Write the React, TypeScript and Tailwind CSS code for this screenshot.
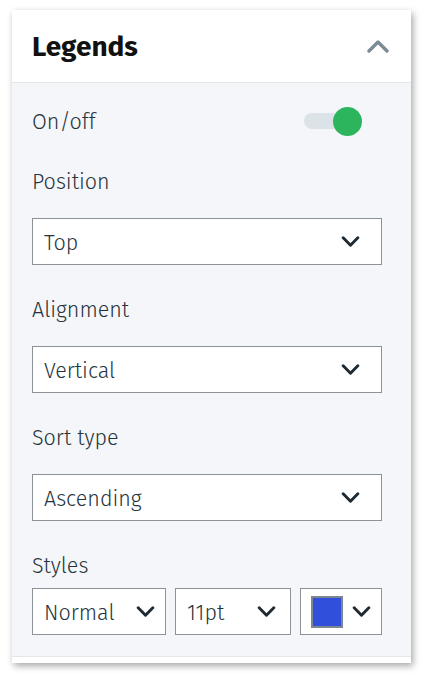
import React from 'react'

// ── Icons ──────────────────────────────────────────────────────────────────────

function ChevronDown({ className = '' }: { className?: string }) {
  return (
    <svg className={className} viewBox="0 0 20 12" fill="none" stroke="currentColor" strokeWidth="3.2">
      <path d="M2 2l8 8 8-8" strokeLinecap="round" strokeLinejoin="round" />
    </svg>
  )
}

function ChevronUp({ className = '' }: { className?: string }) {
  return (
    <svg className={className} viewBox="0 0 22 13" fill="none" stroke="currentColor" strokeWidth="3.4">
      <path d="M2 11l9-9 9 9" strokeLinecap="round" strokeLinejoin="round" />
    </svg>
  )
}

// ── Pieces ─────────────────────────────────────────────────────────────────────

function Label({ children, className = '' }: { children: React.ReactNode; className?: string }) {
  return (
    <div className={`h-[28px] leading-[30px] text-[21.5px] font-light text-[#26333b] ${className}`}>
      {children}
    </div>
  )
}

function Select({ value, className = '' }: { value: string; className?: string }) {
  return (
    <div
      className={`h-[47px] flex items-center justify-between bg-white border-[1.5px] border-[#8b9399] pl-[11px] pr-[21px] ${className}`}
    >
      <span className="text-[21.5px] font-light text-[#26333b] pt-[3px]">{value}</span>
      <ChevronDown className="w-[19px] h-[11px] text-[#1f2a33]" />
    </div>
  )
}

// ── App ────────────────────────────────────────────────────────────────────────

export default function App() {
  return (
    <div
      className="w-[432px] h-[682px] bg-white pt-[10px] pl-[12px]"
      style={{ fontFamily: '"Fira Sans", Lato, "Noto Sans", sans-serif' }}
    >
      <div className="w-[399px] bg-[#f4f6f9] shadow-[2px_3px_7px_rgba(0,0,0,0.35)]">
        {/* Header */}
        <div className="h-[73px] bg-white border-b border-[#e3e7ec] flex items-center justify-between pl-[20px] pr-[22px]">
          <span className="text-[28px] font-bold text-[#111111] pt-[1px]">Legends</span>
          <ChevronUp className="w-[22px] h-[13px] text-[#7b8c96]" />
        </div>

        {/* Body */}
        <div className="pl-[20px] pr-[29px] pt-[24px] pb-[21px]">
          <div className="flex items-center justify-between pr-[20px]">
            <Label>On/off</Label>
            <div className="relative w-[58px] h-[28px] flex items-center">
              <div className="w-[38px] h-[16px] rounded-full bg-[#dce3e8]" />
              <div className="absolute right-0 top-0 w-[29px] h-[29px] rounded-full bg-[#2db55d]" />
            </div>
          </div>

          <Label className="mt-[32px]">Position</Label>
          <Select value="Top" className="mt-[23px]" />

          <Label className="mt-[30px]">Alignment</Label>
          <Select value="Vertical" className="mt-[23px]" />

          <Label className="mt-[30px]">Sort type</Label>
          <Select value="Ascending" className="mt-[23px]" />

          <Label className="mt-[30px]">Styles</Label>
          <div className="mt-[9px] flex gap-[9px]">
            <div className="w-[134px] h-[47px] flex items-center justify-between bg-white border-[1.5px] border-[#8b9399] pl-[11px] pr-[10px]">
              <span className="text-[21.5px] font-light text-[#26333b] pt-[3px]">Normal</span>
              <ChevronDown className="w-[19px] h-[11px] text-[#1f2a33]" />
            </div>
            <div className="w-[116px] h-[47px] flex items-center justify-between bg-white border-[1.5px] border-[#8b9399] pl-[11px] pr-[14px]">
              <span className="text-[21.5px] font-light text-[#26333b] pt-[3px]">11pt</span>
              <ChevronDown className="w-[19px] h-[11px] text-[#1f2a33]" />
            </div>
            <div className="flex-1 h-[47px] flex items-center justify-between bg-white border-[1.5px] border-[#8b9399] pl-[10px] pr-[10px]">
              <div className="w-[32px] h-[32px] bg-[#3050dc] border-2 border-[#7d8790]" />
              <ChevronDown className="w-[19px] h-[11px] text-[#1f2a33]" />
            </div>
          </div>
        </div>

        {/* Footer strip */}
        <div className="h-[7px] bg-white border-t border-[#e3e7ec]" />
      </div>
    </div>
  )
}
